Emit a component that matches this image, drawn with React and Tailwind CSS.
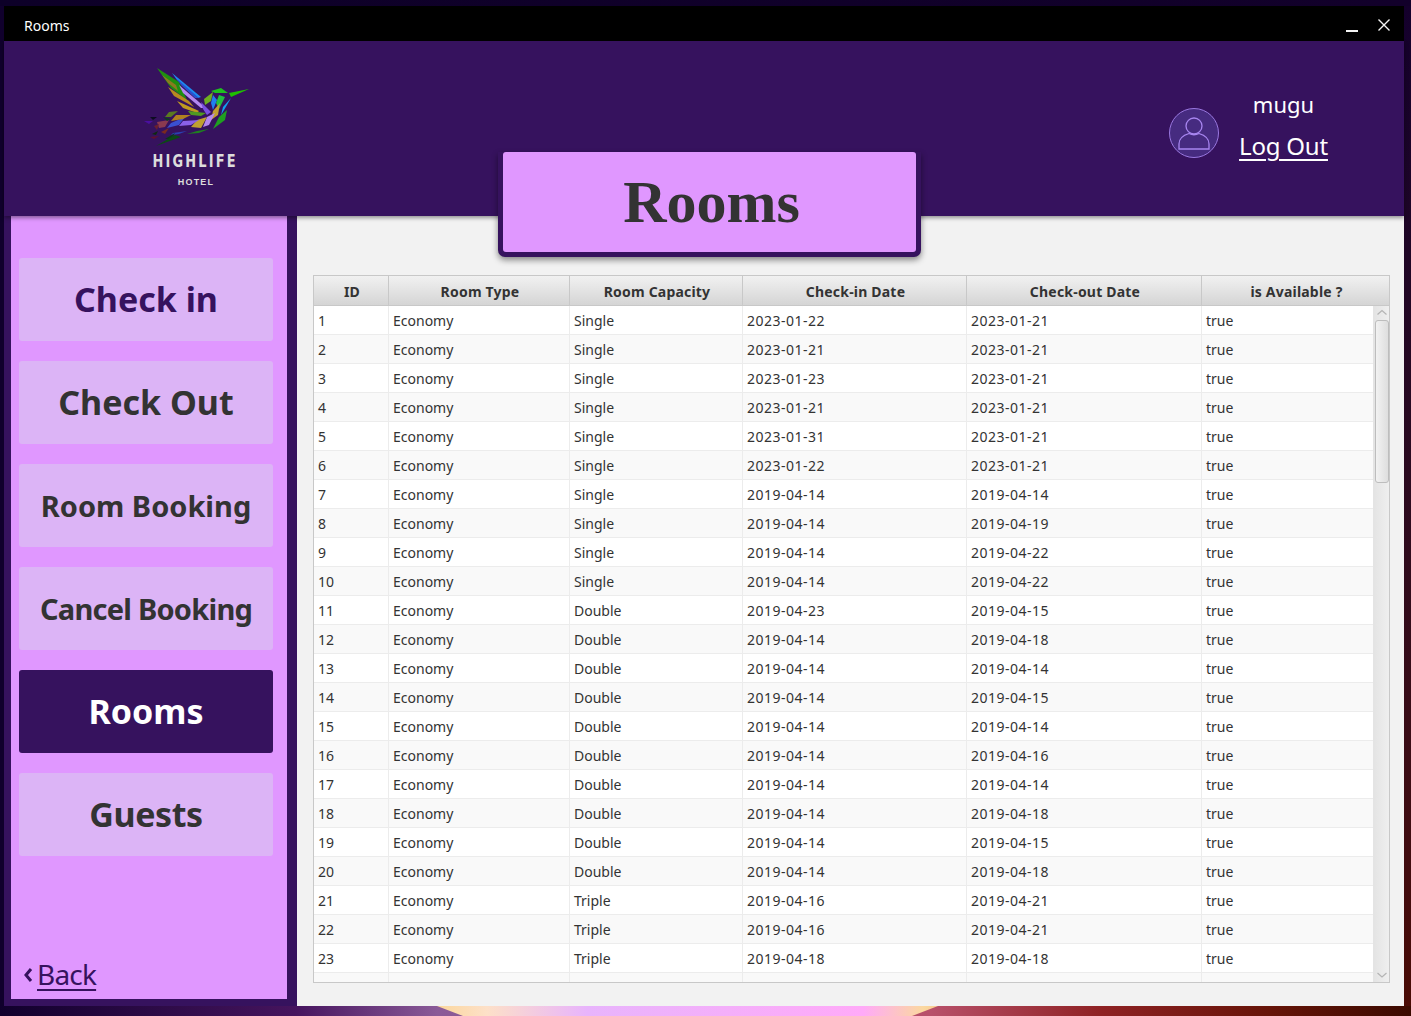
const inDates = ['2023-01-22','2023-01-21','2023-01-23','2023-01-21','2023-01-31','2023-01-22','2019-04-14','2019-04-14','2019-04-14','2019-04-14','2019-04-23','2019-04-14','2019-04-14','2019-04-14','2019-04-14','2019-04-14','2019-04-14','2019-04-14','2019-04-14','2019-04-14','2019-04-16','2019-04-16','2019-04-18'];
const outDates = ['2023-01-21','2023-01-21','2023-01-21','2023-01-21','2023-01-21','2023-01-21','2019-04-14','2019-04-19','2019-04-22','2019-04-22','2019-04-15','2019-04-18','2019-04-14','2019-04-15','2019-04-14','2019-04-16','2019-04-14','2019-04-18','2019-04-15','2019-04-18','2019-04-21','2019-04-21','2019-04-18'];

const rows = inDates.map((d, i) => ({
  id: i + 1,
  type: 'Economy',
  capacity: i < 10 ? 'Single' : i < 20 ? 'Double' : 'Triple',
  checkIn: d,
  checkOut: outDates[i],
  available: 'true',
}));

const navItems = [
  { label: 'Check in', cls: 'bg-[#dcb4f6] text-[#36125e] text-[34px]' },
  { label: 'Check Out', cls: 'bg-[#dcb4f6] text-[#333333] text-[34px]' },
  { label: 'Room Booking', cls: 'bg-[#dcb4f6] text-[#333333] text-[29px]' },
  { label: 'Cancel Booking', cls: 'bg-[#dcb4f6] text-[#333333] text-[29px] tracking-[-0.75px]' },
  { label: 'Rooms', cls: 'bg-[#36125e] text-white text-[34px]' },
  { label: 'Guests', cls: 'bg-[#dcb4f6] text-[#333333] text-[34px] tracking-[-0.4px]' },
];

const headers = ['ID', 'Room Type', 'Room Capacity', 'Check-in Date', 'Check-out Date', 'is Available ?'];

// coordinates are page pixels minus the logo origin (140, 65)
const shards = [
  ['16,3 38,17 46,35 30,23', '#1f8f10'],
  ['21,10 35,20 37,26 27,18', '#8a7a20'],
  ['31,8 60,32 57,33 36,15', '#1c8cf0'],
  ['36,14 58,33 54,33 40,20', '#2a50d0'],
  ['27,22 48,36 53,42 33,31', '#b88a20'],
  ['38,20 65,43 60,43 42,28', '#b488f0'],
  ['36,36 58,46 56,48 42,43', '#c09a20'],
  ['47,46 65,48 60,51 50,50', '#4f9a20'],
  ['60,37 70,47 66,50 62,44', '#7a50e0'],
  ['70,26 80,23 87,28 74,28', '#1fc01f'],
  ['88,28 108,24 90,32', '#1fc000'],
  ['90,33 82,42 80,50 86,40', '#10a0f0'],
  ['63,34 72,27 70,36 64,40', '#6fae20'],
  ['72,30 76,35 72,45 70,38', '#2080f0'],
  ['78,30 84,32 78,44 75,38', '#20c040'],
  ['72,46 79,38 77,50 70,55', '#c0a030'],
  ['78,52 86,45 84,55 72,64', '#1f9f20'],
  ['66,52 74,48 68,60 62,62', '#b488f0'],
  ['56,55 66,52 60,63 50,62', '#c0a030'],
  ['42,56 58,55 50,60 38,61', '#8a60e8'],
  ['30,58 44,52 38,60 26,63', '#3a50d0'],
  ['35,50 50,50 42,54 30,56', '#b08020'],
  ['56,66 68,64 58,68 46,69', '#1f7f20'],
  ['32,68 46,66 38,69 30,70', '#2a40b0'],
  ['28,47 37,46 30,52 24,52', '#5a7a20'],
  ['16,57 28,55 24,62 18,63', '#8a3a50'],
  ['22,52 30,54 26,56', '#0f3a20'],
  ['9,52 16,52 12,55', '#0c0c20'],
  ['3,56 12,56 8,59', '#4a10a0'],
  ['13,61 18,59 16,65', '#6a2030'],
  ['11,69 17,66 15,70', '#0f2a10'],
  ['20,67 28,63 24,69', '#7a2a20'],
  ['9,72 18,71 13,74', '#601030'],
  ['24,74 34,68 30,74', '#0a3a1a'],
  ['15,81 34,70 40,72 26,77', '#0b4a14'],
];

function Logo() {
  return (
    <svg width="110" height="85" viewBox="0 0 110 85" className="block">
      {shards.map(([points, fill], i) => (
        <polygon key={i} points={points} fill={fill} />
      ))}
    </svg>
  );
}

function Wallpaper() {
  return (
    <svg width="1411" height="10" viewBox="0 0 1411 10" className="block">
      <defs>
        <linearGradient id="base" x1="0" x2="1" y1="0" y2="0">
          <stop offset="0" stopColor="#10002c" />
          <stop offset="0.21" stopColor="#46145e" />
          <stop offset="0.31" stopColor="#8a5a98" />
          <stop offset="0.66" stopColor="#b8506a" />
          <stop offset="0.78" stopColor="#8f2224" />
          <stop offset="0.9" stopColor="#661408" />
          <stop offset="1" stopColor="#3a0a00" />
        </linearGradient>
        <linearGradient id="flame" x1="0" x2="1" y1="0" y2="0">
          <stop offset="0" stopColor="#fbd79c" />
          <stop offset="0.1" stopColor="#fde0c8" />
          <stop offset="0.3" stopColor="#e8b4fc" />
          <stop offset="0.85" stopColor="#ffaaf8" />
          <stop offset="0.97" stopColor="#fbd8a0" />
          <stop offset="1" stopColor="#f8cc90" />
        </linearGradient>
      </defs>
      <rect width="1411" height="10" fill="url(#base)" />
      <polygon points="437,0 938,0 912,10 463,10" fill="url(#flame)" />
    </svg>
  );
}

function Scrollbar() {
  return (
    <div className="w-[16px] shrink-0 flex flex-col items-center border-l border-[#e4e4e4] bg-gradient-to-r from-[#e4e4e4] to-[#efefef]">
      <svg width="14" height="14" viewBox="0 0 14 14" className="block shrink-0">
        <path d="M2.5 8.5 7 4.5l4.5 4" fill="none" stroke="#b4b4b4" strokeWidth="1.2" />
      </svg>
      <div className="w-[14px] h-[163px] rounded-[3px] border border-[#bdbdbd] bg-gradient-to-r from-[#f2f2f2] to-[#dedede]" />
      <div className="flex-1" />
      <svg width="14" height="14" viewBox="0 0 14 14" className="block shrink-0">
        <path d="M2.5 5 7 9l4.5-4" fill="none" stroke="#b4b4b4" strokeWidth="1.2" />
      </svg>
    </div>
  );
}

function RoomsTable() {
  return (
    <div className="h-full flex flex-col border border-[#c8c8c8] overflow-hidden text-[#333333] text-[14px]">
      <div className="grid grid-cols-[75px_181px_173px_224px_235px_187px] h-[30px] shrink-0 border-b border-[#c8c8c8] bg-gradient-to-b from-[#f1f1f1] to-[#d5d5d5]">
        {headers.map((h) => (
          <div key={h} className="flex items-center justify-center font-bold tracking-[0.2px] border-r border-[#c8c8c8] last:border-r-0 pt-[1px] pl-[2px]">
            {h}
          </div>
        ))}
      </div>
      <div className="flex flex-1 min-h-0">
        <div className="flex-1 overflow-hidden">
          {rows.map((r) => (
            <div
              key={r.id}
              className="grid grid-cols-[75px_181px_173px_224px_235px_171px] h-[29px] border-b border-[#ececec] odd:bg-white even:bg-[#f9f9f9]"
            >
              <div className="flex items-center pl-[4px] border-r border-[#ececec]">{r.id}</div>
              <div className="flex items-center pl-[4px] border-r border-[#ececec]">{r.type}</div>
              <div className="flex items-center pl-[4px] border-r border-[#ececec]">{r.capacity}</div>
              <div className="flex items-center pl-[4px] border-r border-[#ececec] tracking-[0.5px]">{r.checkIn}</div>
              <div className="flex items-center pl-[4px] border-r border-[#ececec] tracking-[0.5px]">{r.checkOut}</div>
              <div className="flex items-center pl-[4px]">{r.available}</div>
            </div>
          ))}
          <div className="grid grid-cols-[75px_181px_173px_224px_235px_171px] h-[29px] bg-[#f9f9f9]">
            <div className="border-r border-[#ececec]" />
            <div className="border-r border-[#ececec]" />
            <div className="border-r border-[#ececec]" />
            <div className="border-r border-[#ececec]" />
            <div className="border-r border-[#ececec]" />
            <div />
          </div>
        </div>
        <Scrollbar />
      </div>
    </div>
  );
}

export default function App() {
  return (
    <div className="w-[1411px] h-[1016px] overflow-hidden flex flex-col font-['Noto_Sans',sans-serif] bg-[#0d0028]">
      <div className="h-[6px] shrink-0 bg-gradient-to-r from-[#0d0028] to-[#12002a]" />

      <div className="flex flex-1 min-h-0">
        <div className="w-[4px] shrink-0 bg-[#10002c]" />

        <div className="relative w-[1400px] shrink-0 flex flex-col">
          {/* Title bar */}
          <div className="h-[35px] shrink-0 bg-black flex items-center justify-between pt-[3px] pl-[20px] pr-[13px] text-white text-[14px]">
            <span>Rooms</span>
            <div className="flex items-center gap-[18px]">
              <svg width="13" height="13" viewBox="0 0 13 13" className="block">
                <rect x="0" y="11" width="12" height="2" fill="#f4f4f4" />
              </svg>
              <svg width="14" height="14" viewBox="0 0 14 14" className="block">
                <path d="M1.5 1.5 12.5 12.5M12.5 1.5 1.5 12.5" stroke="#f4f4f4" strokeWidth="1.4" />
              </svg>
            </div>
          </div>

          {/* Header */}
          <div className="relative z-10 h-[175px] shrink-0 bg-[#36125e] shadow-[0_2px_4px_rgba(0,0,0,0.4)] flex justify-between">
            <div className="ml-[136px] mt-[24px] w-[112px] flex flex-col items-center">
              <Logo />
              <div className="mt-[1px] -ml-[1px] scale-x-[0.72] font-['DejaVu_Sans',sans-serif] font-bold text-[#dcdcdc] text-[18px] leading-[20px] tracking-[3px] whitespace-nowrap">
                HIGHLIFE
              </div>
              <div className="mt-[5px] font-['Liberation_Sans',sans-serif] font-bold text-[#dcdcdc] text-[9px] leading-[12px] tracking-[1.2px]">
                HOTEL
              </div>
            </div>
            <div className="flex items-center gap-[20px] pr-[76px] mt-[9px]">
              <svg width="50" height="50" viewBox="0 0 50 50" className="block">
                <circle cx="25" cy="25" r="24.5" fill="#462b80" stroke="#9a78e0" strokeWidth="1" />
                <circle cx="25" cy="18" r="8" fill="none" stroke="#a886f0" strokeWidth="1.3" />
                <path d="M10 41v-5c0-6 5-9 10-10.500 3 1.500 7 1.500 10 0 5 1.500 10 4.500 10 10.500v5z" fill="none" stroke="#a886f0" strokeWidth="1.3" />
              </svg>
              <div className="w-[89px] flex flex-col items-center text-white pb-[14px]">
                <span className="text-[22px] leading-[32px]">mugu</span>
                <span className="text-[24px] leading-[36px] mt-[8px] underline underline-offset-[4px] decoration-[2px] tracking-[-0.2px] whitespace-nowrap">
                  Log Out
                </span>
              </div>
            </div>
          </div>

          {/* Page badge sits across the header and the content */}
          <div className="absolute z-20 left-[494px] top-[146px] w-[423px] h-[105px] bg-[#36125e] rounded-b-[7px] px-[5px] pb-[5px] shadow-[0_3px_6px_rgba(0,0,0,0.45)]">
            <div className="h-full bg-[#e097ff] rounded-[3px] pl-[4px] flex items-center justify-center font-['Liberation_Serif',serif] font-bold text-[#333333] text-[60px]">
              Rooms
            </div>
          </div>

          <div className="flex flex-1 min-h-0">
            {/* Sidebar */}
            <div className="w-[293px] shrink-0 bg-[#36125e] pl-[7px] pr-[10px] pb-[7px]">
              <div className="h-full bg-[#e097ff] pt-[42px] pl-[8px] pr-[14px] pb-[7px] flex flex-col">
                <div className="flex flex-col gap-[20px]">
                  {navItems.map((item) => (
                    <div
                      key={item.label}
                      className={`h-[83px] rounded-[3px] flex items-center justify-center font-bold ${item.cls}`}
                    >
                      {item.label}
                    </div>
                  ))}
                </div>
                <div className="mt-auto pl-[4px] flex items-center gap-[4px] text-[#36125e]">
                  <svg width="10" height="16" viewBox="0 0 10 16" className="block mt-[2px]">
                    <path d="M8 2 3 8l5 6" fill="none" stroke="#36125e" strokeWidth="3" />
                  </svg>
                  <span className="text-[28px] leading-[36px] underline underline-offset-[4px] tracking-[-0.8px]">Back</span>
                </div>
              </div>
            </div>

            {/* Content */}
            <div className="flex-1 min-w-0 bg-[#f2f2f2] pt-[59px] pl-[16px] pr-[14px] pb-[23px]">
              <RoomsTable />
            </div>
          </div>
        </div>

        <div className="w-[7px] shrink-0 bg-gradient-to-b from-[#14002c] to-[#4a0b05]" />
      </div>

      <div className="h-[10px] shrink-0">
        <Wallpaper />
      </div>
    </div>
  );
}
